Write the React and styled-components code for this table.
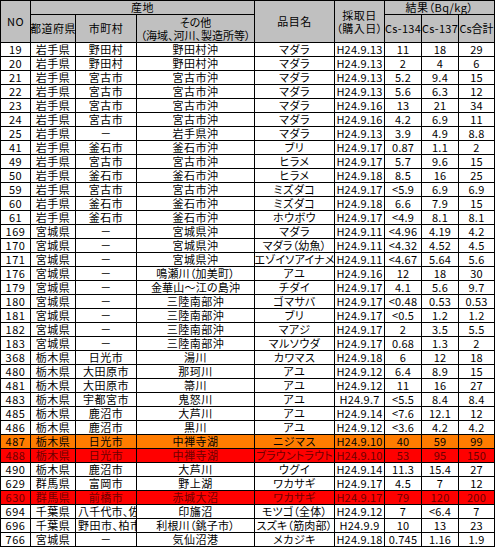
import React from "react";
import styled, { createGlobalStyle } from "styled-components";

const Global = createGlobalStyle`
  html, body { margin: 0; padding: 0; background: #fff; }
  body {
    font-family: "Noto Sans CJK JP", "Noto Sans", sans-serif;
    font-size: 11px;
    color: #000;
  }
`;

const Grid = styled.div`
  display: grid;
  grid-template-columns: 29px 44px 60px 117px 79px 49px 36px 36px 35px;
  grid-template-rows: 13px 27px repeat(36, 13px);
  gap: 1px;
  padding: 1px;
  width: 495px;
  box-sizing: border-box;
  background: #000;
  font-feature-settings: "palt";
`;

const HeadCell = styled.div`
  grid-column: ${(p) => p.$col || "auto"};
  grid-row: ${(p) => p.$row || "auto"};
  background: #c0c0c0;
  display: flex;
  flex-direction: column;
  align-items: center;
  justify-content: center;
  text-align: center;
  line-height: 13px;
  white-space: nowrap;
  overflow: hidden;
  letter-spacing: ${(p) => p.$ls || "0.5px"};
`;

const Cell = styled.div`
  background: ${(p) =>
    p.$tone === "orange" ? "#ff7c00" : p.$tone === "red" ? "#ff0000" : "#fff"};
  color: ${(p) => (p.$tone === "red" ? "#6e0000" : "#000")};
  display: flex;
  align-items: center;
  justify-content: ${(p) => (p.$left ? "flex-start" : "center")};
  padding-left: ${(p) => (p.$left ? "2px" : "0")};
  line-height: 13px;
  white-space: nowrap;
  overflow: hidden;
  letter-spacing: ${(p) => (p.$tight ? "0.2px" : "0.5px")};
`;

const rows = [
  ["19", "岩手県", "野田村", "野田村沖", "マダラ", "H24.9.13", "11", "18", "29"],
  ["20", "岩手県", "野田村", "野田村沖", "マダラ", "H24.9.13", "2", "4", "6"],
  ["21", "岩手県", "宮古市", "宮古市沖", "マダラ", "H24.9.13", "5.2", "9.4", "15"],
  ["22", "岩手県", "宮古市", "宮古市沖", "マダラ", "H24.9.13", "5.6", "6.3", "12"],
  ["23", "岩手県", "宮古市", "宮古市沖", "マダラ", "H24.9.16", "13", "21", "34"],
  ["24", "岩手県", "宮古市", "宮古市沖", "マダラ", "H24.9.16", "4.2", "6.9", "11"],
  ["25", "岩手県", "－", "岩手県沖", "マダラ", "H24.9.13", "3.9", "4.9", "8.8"],
  ["41", "岩手県", "釜石市", "釜石市沖", "ブリ", "H24.9.17", "0.87", "1.1", "2"],
  ["49", "岩手県", "宮古市", "宮古市沖", "ヒラメ", "H24.9.17", "5.7", "9.6", "15"],
  ["50", "岩手県", "釜石市", "釜石市沖", "ヒラメ", "H24.9.18", "8.5", "16", "25"],
  ["59", "岩手県", "宮古市", "宮古市沖", "ミズダコ", "H24.9.17", "<5.9", "6.9", "6.9"],
  ["60", "岩手県", "釜石市", "釜石市沖", "ミズダコ", "H24.9.18", "6.6", "7.9", "15"],
  ["61", "岩手県", "釜石市", "釜石市沖", "ホウボウ", "H24.9.17", "<4.9", "8.1", "8.1"],
  ["169", "宮城県", "－", "宮城県沖", "マダラ", "H24.9.11", "<4.96", "4.19", "4.2"],
  ["170", "宮城県", "－", "宮城県沖", "マダラ（幼魚）", "H24.9.11", "<4.32", "4.52", "4.5"],
  ["171", "宮城県", "－", "宮城県沖", "エゾイソアイナメ", "H24.9.11", "<4.67", "5.64", "5.6"],
  ["176", "宮城県", "－", "鳴瀬川（加美町）", "アユ", "H24.9.16", "12", "18", "30"],
  ["179", "宮城県", "－", "金華山～江の島沖", "チダイ", "H24.9.17", "4.1", "5.6", "9.7"],
  ["180", "宮城県", "－", "三陸南部沖", "ゴマサバ", "H24.9.17", "<0.48", "0.53", "0.53"],
  ["181", "宮城県", "－", "三陸南部沖", "ブリ", "H24.9.17", "<0.5", "1.2", "1.2"],
  ["182", "宮城県", "－", "三陸南部沖", "マアジ", "H24.9.17", "2", "3.5", "5.5"],
  ["183", "宮城県", "－", "三陸南部沖", "マルソウダ", "H24.9.17", "0.68", "1.3", "2"],
  ["368", "栃木県", "日光市", "湯川", "カワマス", "H24.9.18", "6", "12", "18"],
  ["480", "栃木県", "大田原市", "那珂川", "アユ", "H24.9.12", "6.4", "8.9", "15"],
  ["481", "栃木県", "大田原市", "箒川", "アユ", "H24.9.12", "11", "16", "27"],
  ["483", "栃木県", "宇都宮市", "鬼怒川", "アユ", "H24.9.7", "<5.5", "8.4", "8.4"],
  ["485", "栃木県", "鹿沼市", "大芦川", "アユ", "H24.9.14", "<7.6", "12.1", "12"],
  ["486", "栃木県", "鹿沼市", "黒川", "アユ", "H24.9.12", "<3.6", "4.2", "4.2"],
  ["487", "栃木県", "日光市", "中禅寺湖", "ニジマス", "H24.9.10", "40", "59", "99", "orange"],
  ["488", "栃木県", "日光市", "中禅寺湖", "ブラウントラウト", "H24.9.10", "53", "95", "150", "red"],
  ["490", "栃木県", "鹿沼市", "大芦川", "ウグイ", "H24.9.14", "11.3", "15.4", "27"],
  ["629", "群馬県", "富岡市", "野上湖", "ワカサギ", "H24.9.17", "4.5", "7", "12"],
  ["630", "群馬県", "前橋市", "赤城大沼", "ワカサギ", "H24.9.17", "79", "120", "200", "red"],
  ["694", "千葉県", "八千代市、佐倉市", "印旛沼", "モツゴ（全体）", "H24.9.12", "7", "<6.4", "7"],
  ["696", "千葉県", "野田市、柏市", "利根川（銚子市）", "スズキ（筋肉部）", "H24.9.9", "10", "13", "23"],
  ["766", "宮城県", "－", "気仙沼港", "メカジキ", "H24.9.18", "0.745", "1.16", "1.9"],
];

export default function App() {
  return (
    <>
      <Global />
      <Grid>
        <HeadCell $col="1" $row="1 / span 2">NO</HeadCell>
        <HeadCell $col="2 / span 3" $row="1">産地</HeadCell>
        <HeadCell $col="5" $row="1 / span 2">品目名</HeadCell>
        <HeadCell $col="6" $row="1 / span 2">
          <span>採取日</span>
          <span>（購入日）</span>
        </HeadCell>
        <HeadCell $col="7 / span 3" $row="1">結果（Bq/kg）</HeadCell>
        <HeadCell $col="2" $row="2">都道府県</HeadCell>
        <HeadCell $col="3" $row="2">市町村</HeadCell>
        <HeadCell $col="4" $row="2" $ls="0">
          <span>その他</span>
          <span>（海域、河川、製造所等）</span>
        </HeadCell>
        <HeadCell $col="7" $row="2" $ls="0.3px">Cs-134</HeadCell>
        <HeadCell $col="8" $row="2" $ls="0.3px">Cs-137</HeadCell>
        <HeadCell $col="9" $row="2" $ls="0">Cs合計</HeadCell>
        {rows.map((r) => {
          const tone = r[9];
          return r.slice(0, 9).map((v, i) => (
            <Cell
              key={r[0] + "-" + i}
              $tone={tone}
              $left={i === 2 && v.length > 5}
              $tight={i >= 5 || v.length > 6}
            >
              {v}
            </Cell>
          ));
        })}
      </Grid>
    </>
  );
}
